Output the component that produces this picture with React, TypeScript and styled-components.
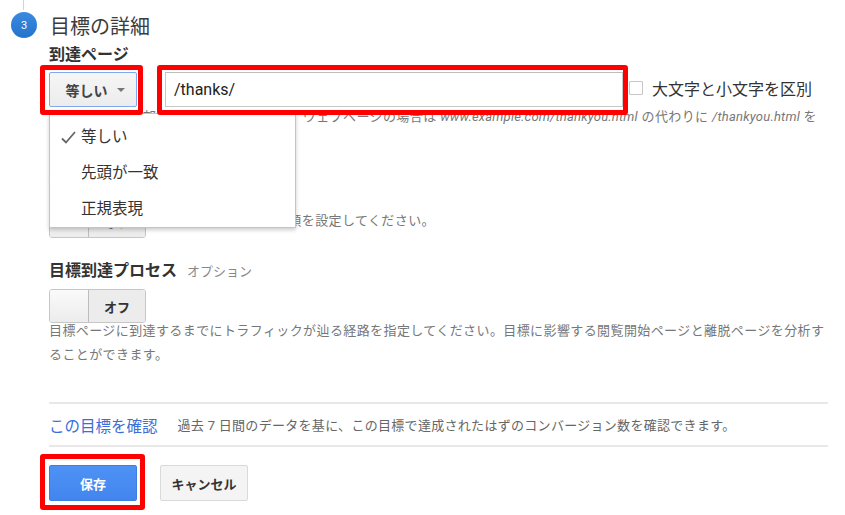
import styled, { createGlobalStyle } from 'styled-components';

const GlobalStyle = createGlobalStyle`
  body {
    margin: 0;
    background: #fff;
    font-family: Roboto, "Noto Sans CJK JP", sans-serif;
    color: #333;
  }
`;

const Page = styled.div`
  width: 845px;
  height: 515px;
  overflow: hidden;
`;

const Rail = styled.div`
  height: 10px;
  margin-left: 23px;
  border-left: 1px solid #d4d4d4;
`;

const StepHeader = styled.div`
  display: flex;
  align-items: center;
  height: 30px;
`;

const StepBadge = styled.div`
  width: 26px;
  height: 26px;
  margin-left: 11px;
  border-radius: 50%;
  background: linear-gradient(#3a8ae0, #2474cc);
  color: #fff;
  font-size: 11px;
  display: flex;
  align-items: center;
  justify-content: center;
`;

const StepTitle = styled.h2`
  margin: 0 0 0 13px;
  font-size: 20px;
  font-weight: 400;
  color: #3c3c3c;
`;

const Body = styled.div`
  padding-left: 49px;
  width: 779px;
`;

const FieldLabel = styled.div<{ $top: number }>`
  margin-top: ${p => p.$top}px;
  line-height: 20px;
  font-size: 16px;
  font-weight: 700;
  color: #333;
  display: flex;
  align-items: baseline;
  gap: 10px;
`;

const Optional = styled.span`
  font-size: 13px;
  font-weight: 400;
  color: #888;
`;

const MatchRow = styled.div`
  display: flex;
  align-items: flex-start;
  margin-top: 7px;
  height: 35px;
`;

const Marked = styled.div<{ $inset: string; $gap?: number }>`
  position: relative;
  margin-left: ${p => p.$gap ?? 0}px;
  &::after {
    content: '';
    position: absolute;
    inset: ${p => p.$inset};
    border: 5px solid #f00;
    border-radius: 3px;
    pointer-events: none;
    z-index: 20;
  }
`;

const SelectButton = styled.button`
  width: 88px;
  height: 35px;
  display: flex;
  align-items: center;
  justify-content: center;
  gap: 9px;
  border: 1px solid #7fa8f0;
  border-radius: 2px;
  background: linear-gradient(#f6f6f6, #ececec);
  font-family: inherit;
  font-size: 14px;
  font-weight: 700;
  color: #444;
  padding: 0 0 0 4px;
`;

const Caret = styled.span`
  width: 0;
  height: 0;
  border-left: 4px solid transparent;
  border-right: 4px solid transparent;
  border-top: 4px solid #777;
`;

const Menu = styled.ul`
  position: absolute;
  top: 41px;
  left: 0;
  width: 245px;
  margin: 0;
  padding: 5px 0 0;
  list-style: none;
  background: #fff;
  border: 1px solid #c4c4c4;
  box-shadow: 0 2px 4px rgba(0, 0, 0, 0.2);
  z-index: 10;
`;

const MenuItem = styled.li`
  position: relative;
  height: 36px;
  line-height: 36px;
  padding-left: 31px;
  font-size: 15.5px;
  color: #333;
`;

const Check = styled.svg`
  position: absolute;
  left: 11px;
  top: 12px;
`;

const TextInput = styled.input`
  box-sizing: border-box;
  width: 458px;
  height: 35px;
  border: 1px solid #c8c8c8;
  border-top-color: #bdbdbd;
  padding: 0 8px;
  font-family: inherit;
  font-size: 16px;
  color: #222;
  outline: none;
`;

const CheckBox = styled.span`
  box-sizing: border-box;
  width: 14px;
  height: 14px;
  margin: 9px 0 0 6px;
  border: 1px solid #c6c6c6;
  border-radius: 1px;
  background: #fff;
`;

const CheckLabel = styled.span`
  margin-left: 9px;
  line-height: 35px;
  font-size: 16px;
  color: #333;
`;

const Help = styled.p<{ $top?: number }>`
  margin: ${p => p.$top ?? 0}px 0 0;
  font-size: 13px;
  letter-spacing: 0.4px;
  line-height: 20px;
  color: #777;
  i {
    letter-spacing: 0.2px;
  }
`;

const ValueRow = styled.div`
  display: flex;
  align-items: center;
  margin-top: 8px;
`;

const Toggle = styled.div<{ $top?: number }>`
  box-sizing: border-box;
  display: flex;
  width: 97px;
  height: 34px;
  margin-top: ${p => p.$top ?? 0}px;
  border: 1px solid #c6c6c6;
  border-radius: 3px;
  overflow: hidden;
`;

const Knob = styled.span`
  width: 38px;
  background: linear-gradient(#fafafa, #ececec);
  border-right: 1px solid #bdbdbd;
`;

const ToggleText = styled.span`
  flex: 1;
  display: flex;
  align-items: center;
  justify-content: center;
  background: #ececec;
  font-size: 13px;
  font-weight: 700;
  color: #333;
`;

const SideNote = styled(Help)`
  margin-left: 22px;
`;

const Desc = styled(Help)`
  margin-top: -4px;
  line-height: 24px;
`;

const Divider = styled.hr<{ $top: number }>`
  margin: ${p => p.$top}px 0 0;
  border: 0;
  border-top: 2px solid #e8e8e8;
`;

const VerifyRow = styled.div`
  display: flex;
  align-items: center;
  height: 41px;
  gap: 20px;
`;

const VerifyLink = styled.a`
  font-size: 15.5px;
  color: #3a6fd8;
  text-decoration: none;
`;

const VerifyNote = styled.span`
  font-size: 13px;
  letter-spacing: 0.3px;
  color: #666;
`;

const ButtonRow = styled.div`
  display: flex;
  gap: 23px;
  margin-top: 18px;
`;

const Button = styled.button<{ $primary?: boolean }>`
  width: 88px;
  height: 36px;
  border-radius: 2px;
  font-family: inherit;
  font-size: 13px;
  font-weight: 700;
  border: 1px solid ${p => (p.$primary ? '#3b7fe6' : '#dadada')};
  background: ${p => (p.$primary ? 'linear-gradient(#4f92f5, #4285ee)' : '#f4f4f4')};
  color: ${p => (p.$primary ? '#fff' : '#333')};
`;

export default function App() {
  return (
    <Page>
      <GlobalStyle />
      <Rail />
      <StepHeader>
        <StepBadge>3</StepBadge>
        <StepTitle>目標の詳細</StepTitle>
      </StepHeader>
      <Body>
        <FieldLabel $top={5}>到達ページ</FieldLabel>
        <MatchRow>
          <Marked $inset="-7px -6px -8px -9px">
            <SelectButton>
              等しい <Caret />
            </SelectButton>
            <Menu>
              <MenuItem>
                <Check width="15" height="13" viewBox="0 0 15 13">
                  <path d="M1 7.5 L5 11.5 L14 1" fill="none" stroke="#666" strokeWidth="1.8" />
                </Check>
                等しい
              </MenuItem>
              <MenuItem>先頭が一致</MenuItem>
              <MenuItem>正規表現</MenuItem>
            </Menu>
          </Marked>
          <Marked $inset="-7px -5px -8px -8px" $gap={28}>
            <TextInput defaultValue="/thanks/" />
          </Marked>
          <CheckBox />
          <CheckLabel>大文字と小文字を区別</CheckLabel>
        </MatchRow>
        <Help>
          ドメインの後の部分を入力してください。ウェブページの場合は <i>www.example.com/thankyou.html</i> の代わりに <i>/thankyou.html</i> を
          <br />
          入力します。
        </Help>
        <FieldLabel $top={28}>
          値 <Optional>オプション</Optional>
        </FieldLabel>
        <ValueRow>
          <Toggle>
            <Knob />
            <ToggleText>オフ</ToggleText>
          </Toggle>
          <SideNote>コンバージョンに金額を設定してください。</SideNote>
        </ValueRow>
        <FieldLabel $top={23}>
          目標到達プロセス <Optional>オプション</Optional>
        </FieldLabel>
        <Toggle $top={7}>
          <Knob />
          <ToggleText>オフ</ToggleText>
        </Toggle>
        <Desc>
          目標ページに到達するまでにトラフィックが辿る経路を指定してください。目標に影響する閲覧開始ページと離脱ページを分析することができます。
        </Desc>
        <Divider $top={35} />
        <VerifyRow>
          <VerifyLink href="#">この目標を確認</VerifyLink>
          <VerifyNote>過去 7 日間のデータを基に、この目標で達成されたはずのコンバージョン数を確認できます。</VerifyNote>
        </VerifyRow>
        <Divider $top={0} />
        <ButtonRow>
          <Marked $inset="-11px -8px -9px -9px">
            <Button $primary>保存</Button>
          </Marked>
          <Button>キャンセル</Button>
        </ButtonRow>
      </Body>
    </Page>
  );
}
